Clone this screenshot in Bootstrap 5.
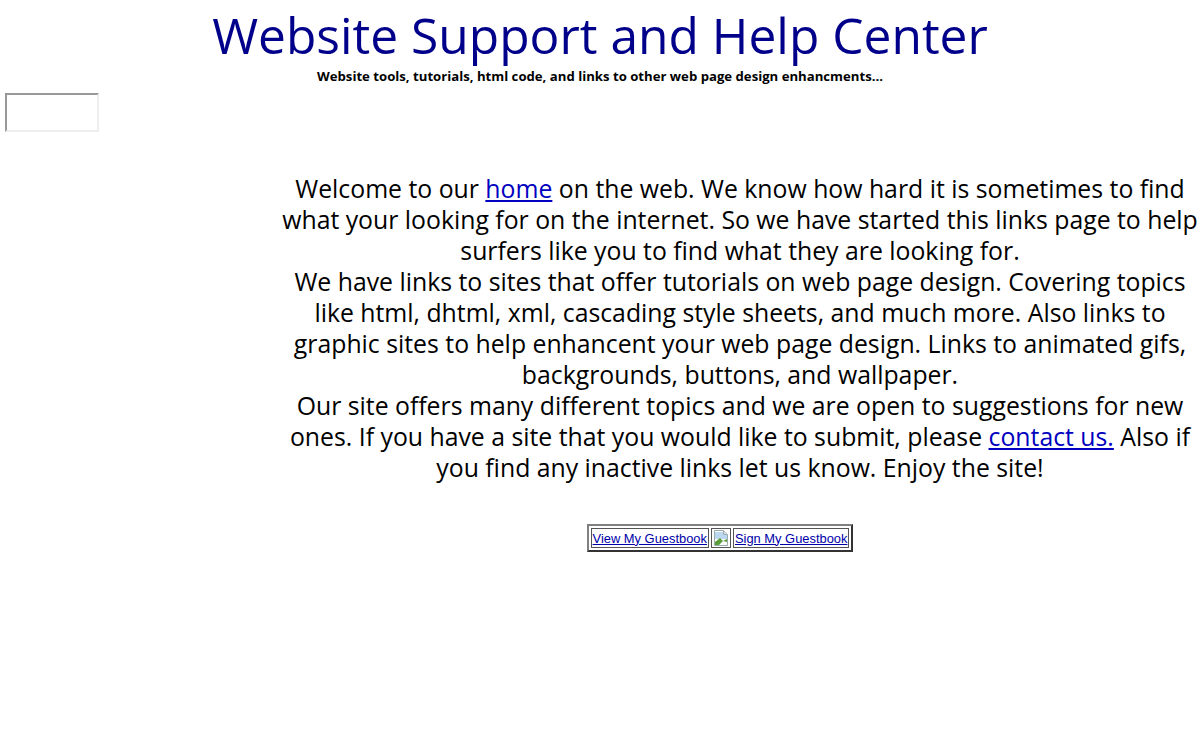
<!DOCTYPE html>
<html lang="en"><head><meta charset="utf-8"><title>Website Support and Help Center</title>
<link href="https://cdn.jsdelivr.net/npm/bootstrap@5.3.0/dist/css/bootstrap.min.css" rel="stylesheet">
<style>
body{background:#fff;color:#000;font-family:"Open Sans","Noto Sans",sans-serif;overflow:hidden}
.site-title{font-family:"Open Sans",sans-serif;font-size:49.7px;line-height:56px;color:#00008b;font-weight:400;margin:7px 0 0}
.site-sub{font-family:"Open Sans",sans-serif;font-size:13.16px;font-weight:700;line-height:16px;margin:5px 0 0}
.fake-box{width:94px;height:39px;margin:9px 0 0 5px;border:2px solid;border-color:#999 #eee #eee #999;background:#fff}
.intro{width:920px;margin:41px 0 0 280px;text-align:center;font-size:24.8px;line-height:31px}
.intro a{color:#0000c0}
.gb{margin:41px 0 0 240px;width:960px}
.gb-t{border:2px solid;border-color:#808080 #333 #333 #808080;border-spacing:2px;border-collapse:separate;font-family:"Liberation Sans",sans-serif;font-size:12.9px}
.gb-t td{border:1px solid #555;padding:1px;line-height:15px}
.gb-t a{color:#0000aa}
</style></head><body>
<h1 class="site-title text-center">Website Support and Help Center</h1>
<p class="site-sub text-center">Website tools, tutorials, html code, and links to other web page design enhancments...</p>
<div class="fake-box"></div>
<div class="intro">Welcome to our <a href="#">home</a> on the web. We know how hard it is sometimes to find what your looking for on the internet. So we have started this links page to help surfers like you to find what they are looking for.<br>We have links to sites that offer tutorials on web page design. Covering topics like html, dhtml, xml, cascading style sheets, and much more. Also links to graphic sites to help enhancent your web page design. Links to animated gifs, backgrounds, buttons, and wallpaper.<br>Our site offers many different topics and we are open to suggestions for new ones. If you have a site that you would like to submit, please <a href="#">contact us.</a> Also if you find any inactive links let us know. Enjoy the site!</div>
<div class="gb d-flex justify-content-center"><table class="gb-t"><tr><td><a href="#">View My Guestbook</a></td><td><svg width="16" height="16" viewBox="0 0 16 16" class="d-block"><path d="M1.5.5h9l4 4v11h-13z" fill="#fff" stroke="#9aa"/><path d="M10.5.5v4h4" fill="#dde" stroke="#9aa"/><path d="M2 2h8v3h4v4H2z" fill="#bcd8f0"/><path d="M2 15v-3l5-4 3 3 4-2v6z" fill="#5a9e3a"/><path d="M6 15l4-4 4 1v3z" fill="#fff"/></svg></td><td><a href="#">Sign My Guestbook</a></td></tr></table></div>
<script src="https://cdn.jsdelivr.net/npm/bootstrap@5.3.0/dist/js/bootstrap.bundle.min.js"></script>
</body></html>
